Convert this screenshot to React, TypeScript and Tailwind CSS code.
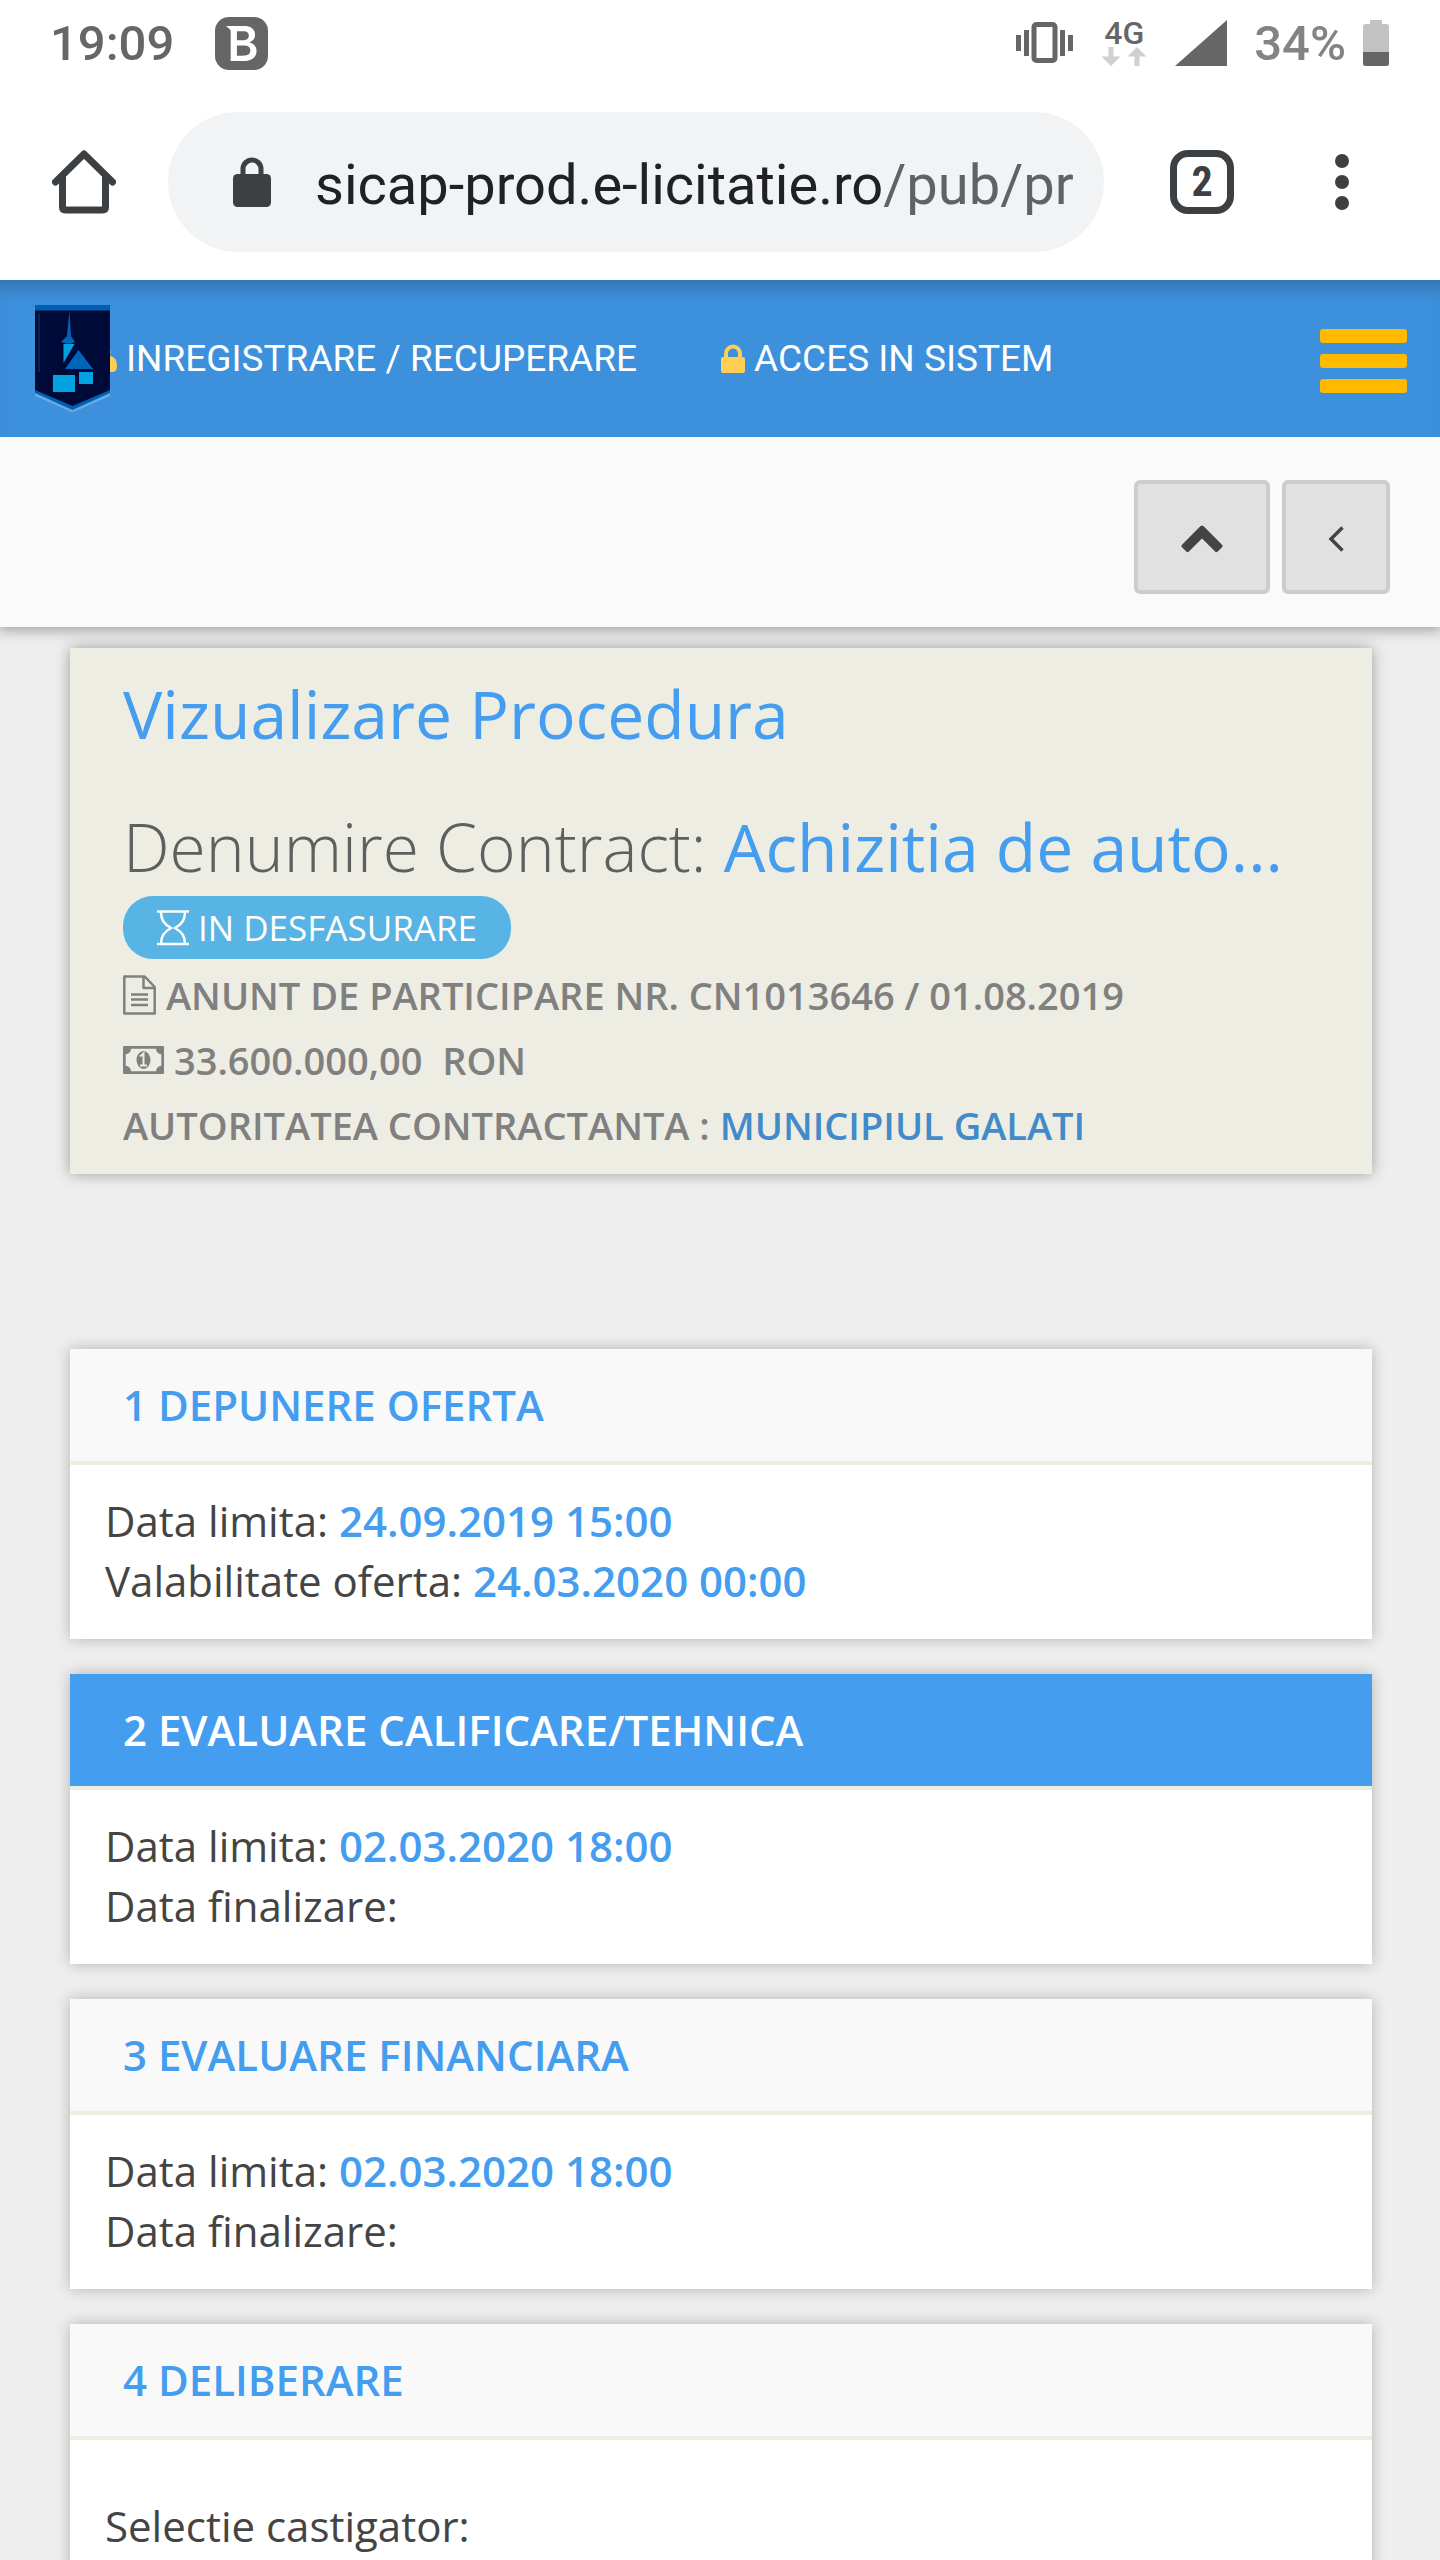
import type { ReactNode } from 'react';
import { SiBitdefender } from 'react-icons/si';

interface Step {
  title: string;
  active?: boolean;
  spaced?: boolean;
  rows: { label: string; value?: string }[];
}

const steps: Step[] = [
  {
    title: '1 DEPUNERE OFERTA',
    rows: [
      { label: 'Data limita:', value: '24.09.2019 15:00' },
      { label: 'Valabilitate oferta:', value: '24.03.2020 00:00' },
    ],
  },
  {
    title: '2 EVALUARE CALIFICARE/TEHNICA',
    active: true,
    rows: [{ label: 'Data limita:', value: '02.03.2020 18:00' }, { label: 'Data finalizare:' }],
  },
  {
    title: '3 EVALUARE FINANCIARA',
    rows: [{ label: 'Data limita:', value: '02.03.2020 18:00' }, { label: 'Data finalizare:' }],
  },
  {
    title: '4 DELIBERARE',
    spaced: true,
    rows: [{ label: 'Selectie castigator:' }],
  },
];

function StatusBar() {
  return (
    <div className="flex h-[84px] items-center pt-[2px] pr-[51px] pl-[50px] text-[49px] leading-none font-medium text-[#666666]">
      <span>19:09</span>
      <span className="ml-[41px] flex h-[53px] w-[53px] items-center justify-center rounded-[14px] bg-[#666666] text-white">
        <SiBitdefender className="h-[35px] w-[35px]" />
      </span>

      <svg className="ml-auto h-[42px] w-[58px]" viewBox="0 0 58 42" fill="currentColor">
        <path d="M0 13h5v16H0zM8 8h5v26H8zM44 8h5v26h-5zM52 13h5v16h-5z" />
        <rect x="18" y="2.500" width="21" height="36" rx="2.500" fill="none" stroke="currentColor" strokeWidth="5" />
      </svg>
      <span className="ml-[27px] flex w-[46px] flex-col items-center">
        <span className="text-[32px] leading-7">4G</span>
        <svg className="h-[20px] w-[46px]" viewBox="0 0 46 20" fill="#d0d0d0">
          <path d="M7.500 0h5v9.500h7L10 19 .5 9.500h7zM33.500 19h5V9.500h7L36 0l-9.500 9.500h7z" />
        </svg>
      </span>
      <svg className="ml-[28px] h-[46px] w-[52px]" viewBox="0 0 52 46" fill="currentColor">
        <path d="M52 0v46H0z" />
      </svg>
      <span className="ml-[27px] text-[#838383]">34%</span>
      <svg className="ml-[17px] h-[46px] w-[26px]" viewBox="0 0 26 46">
        <path d="M7 0h12v4h4.500a2.500 2.500 0 0 1 2.500 2.500V32H0V6.500A2.500 2.500 0 0 1 2.500 4H7z" fill="#c2c2c2" />
        <path d="M0 32h26v11.500a2.500 2.500 0 0 1-2.500 2.500h-21A2.500 2.500 0 0 1 0 43.500z" fill="#666666" />
      </svg>
    </div>
  );
}

function BrowserBar() {
  return (
    <div className="flex h-[196px] items-center pr-[91px] pl-[52px] text-[#3c4043]">
      <button type="button" aria-label="Home" className="shrink-0">
        <svg className="h-[64px] w-[64px]" viewBox="0 0 64 64" fill="none" stroke="currentColor" strokeWidth="7" strokeLinecap="round" strokeLinejoin="round">
          <path d="M3.500 32 32 4l28.500 28" />
          <path d="M10.500 27v30q0 3 3 3h37q3 0 3-3V27" />
        </svg>
      </button>
      <button type="button" className="ml-[52px] flex h-[140px] min-w-0 flex-1 items-center rounded-full bg-[#f1f3f4] pr-[24px] pl-[65px] text-left">
        <svg className="h-[50px] w-[38px] shrink-0" viewBox="0 0 38 50">
          <rect x="0" y="17" width="38" height="33" rx="4.500" fill="currentColor" />
          <path d="M10 19v-7a9 9 0 0 1 18 0v7" fill="none" stroke="currentColor" strokeWidth="5" />
        </svg>
        <span className="ml-[44px] overflow-hidden pt-1.5 text-[56px] leading-[72px] whitespace-nowrap text-[#202124]">
          sicap-prod.e-licitatie.ro<span className="text-[#5f6368]">/pub/pr</span>
        </span>
      </button>
      <button type="button" aria-label="Tabs" className="ml-[66px] flex h-[64px] w-[64px] shrink-0 items-center justify-center rounded-[18px] border-[7px] border-[#3c4043] font-['Roboto_Condensed',Roboto,sans-serif] text-[42px] leading-none font-bold">
        2
      </button>
      <button type="button" aria-label="Menu" className="ml-[101px] flex shrink-0 flex-col gap-[7px]">
        <span className="h-[14px] w-[14px] rounded-full bg-[#3c4043]" />
        <span className="h-[14px] w-[14px] rounded-full bg-[#3c4043]" />
        <span className="h-[14px] w-[14px] rounded-full bg-[#3c4043]" />
      </button>
    </div>
  );
}

function Logo() {
  return (
    <svg className="relative z-10 h-[108px] w-[75px] shrink-0" viewBox="0 0 75 108">
      <path d="M0 85v6l37.500 16.500L75 91v-6z" fill="#67a9e4" />
      <path d="M0 0h75v88l-37.500 17L0 88z" fill="#0060b4" />
      <path d="M0 5.500h75V85l-37.500 16L0 85z" fill="#000a38" />
      <path d="M4 8v59" stroke="#04264f" strokeWidth="2" />
      <path d="M34.500 5.500 32 31l-6 6q8 3 14 0l-4-6z" fill="#0065b8" />
      <path d="M28.500 39h11l-11 19z" fill="#00a3e0" />
      <path d="M43.500 45 58 64H30z" fill="#0065b8" />
      <path d="M18 70h22v17H18zM44 67h14v12H44z" fill="#00a3e0" />
    </svg>
  );
}

function SiteNav() {
  return (
    <nav className="relative z-10 flex h-[157px] items-center bg-[#3d90dc] pr-[33px] pl-[35px] text-[37px] leading-[52px] text-white shadow-[inset_0_20px_18px_-14px_rgba(40,90,130,0.6)]">
      <Logo />
      <a href="#inregistrare" className="flex items-center">
        <svg className="-ml-[20px] h-[30px] w-[27px]" viewBox="0 0 27 30" fill="#ffce54">
          <circle cx="13.500" cy="8" r="7" />
          <path d="M6 12q7.500 6 15 0 6 2 6 10 0 6-5 6H5q-5 0-5-6 0-8 6-10z" />
        </svg>
        <span className="ml-[9px]">INREGISTRARE / RECUPERARE</span>
      </a>
      <a href="#acces" className="ml-[84px] flex items-center">
        <svg className="h-[30px] w-[24px]" viewBox="0 0 24 30">
          <rect y="13" width="24" height="16" rx="2" fill="#ffce54" />
          <path d="M5 14V9.500a7 7 0 0 1 14 0V14" fill="none" stroke="#ffce54" strokeWidth="4" />
        </svg>
        <span className="ml-[9px]">ACCES IN SISTEM</span>
      </a>
      <button type="button" aria-label="Meniu" className="ml-auto flex flex-col gap-[11px] pt-1">
        <span className="h-[14px] w-[87px] rounded-[3px] bg-[#ffba00]" />
        <span className="h-[14px] w-[87px] rounded-[3px] bg-[#ffba00]" />
        <span className="h-[14px] w-[87px] rounded-[3px] bg-[#ffba00]" />
      </button>
    </nav>
  );
}

function ActionBar() {
  return (
    <div className="relative flex justify-end gap-3 bg-[#fafafa] pt-[43px] pr-[50px] pb-[33px] text-[#444444] shadow-[0_2px_12px_2px_rgba(0,0,0,0.3)]">
      <button type="button" aria-label="Sus" className="flex h-[114px] w-[136px] items-center justify-center rounded-md border-4 border-[#cccccc] bg-[#e1e1e1] pt-1">
        <svg className="h-[30px] w-[42px]" viewBox="0 0 42 30" fill="currentColor">
          <path d="M19.600 2.100q1.400-1.400 2.800 0L41 20.700q1.300 1.300 0 2.600l-4.300 4.200q-1.300 1.300-2.600 0L21 14.400 7.900 27.500q-1.300 1.300-2.600 0L1 23.300q-1.300-1.300 0-2.600z" />
        </svg>
      </button>
      <button type="button" aria-label="Inapoi" className="flex h-[114px] w-[108px] items-center justify-center rounded-md border-4 border-[#cccccc] bg-[#e1e1e1] pt-1">
        <svg className="h-[26px] w-[16px]" viewBox="0 0 16 26" fill="none" stroke="currentColor" strokeWidth="3.500">
          <path d="M14.500 1.500 3 13l11.500 11.500" />
        </svg>
      </button>
    </div>
  );
}

function DetailRow({ icon, children }: { icon?: ReactNode; children: ReactNode }) {
  return (
    <div className="flex h-[65px] items-center whitespace-pre">
      {icon}
      <span>{children}</span>
    </div>
  );
}

function ProcedureCard() {
  return (
    <section className="mt-[21px] bg-[#edede4] px-[53px] pt-5 pb-[17px] shadow-[0_0_14px_rgba(0,0,0,0.35)]">
      <h1 className="text-[66px] leading-[90px] text-[#449dee]">Vizualizare Procedura</h1>
      <h2 className="mt-[42px] truncate text-[66px] leading-[92px] font-light text-[#5f5f5f]">
        Denumire Contract: <span className="font-normal text-[#449dee]">Achizitia de auto...</span>
      </h2>
      <div className="mt-1 flex h-[63px] w-fit items-center rounded-[30px] bg-[#57b4e4] px-[34px] text-[35px] leading-none text-white">
        <svg className="mr-[9px] h-[36px] w-[32px]" viewBox="0 0 32 36" fill="none" stroke="currentColor" strokeWidth="2.500">
          <path d="M0 1.500h32M0 34h32M4 2c0 8 3 12 10 16-7 4-10 8-10 16M28 2c0 8-3 12-10 16 7 4 10 8 10 16" />
        </svg>
        IN DESFASURARE
      </div>
      <div className="mt-[3px] text-[38px] leading-[52px] font-semibold text-[#808080]">
        <DetailRow
          icon={
            <svg className="mr-[10px] h-[40px] w-[33px]" viewBox="0 0 33 40" fill="none" stroke="currentColor" strokeWidth="2.500" strokeLinejoin="round">
              <path d="M1.300 1.500h20.400l10 10.500v26.500H1.300zM20.500 1.500V13h11M8 19.500h17M8 24.500h17M8 30h17" />
            </svg>
          }
        >
          ANUNT DE PARTICIPARE NR. CN1013646 / 01.08.2019
        </DetailRow>
        <DetailRow
          icon={
            <svg className="mr-[10px] h-[28px] w-[41px]" viewBox="0 0 41 28" fill="currentColor">
              <path fillRule="evenodd" d="M1 0h39q1 0 1 1v26q0 1-1 1H1q-1 0-1-1V1q0-1 1-1zM8 2.800a5.500 5.500 0 0 1-5.300 5.500v11.400A5.500 5.500 0 0 1 8 25.200h25a5.500 5.500 0 0 1 5.300-5.500V8.300A5.500 5.500 0 0 1 33 2.800z" />
              <ellipse cx="20.500" cy="14" rx="7" ry="9" />
              <path d="M17 10.500 20.500 7.500V19M17 19.500h7" fill="none" stroke="#edede4" strokeWidth="2" />
            </svg>
          }
        >
          {'33.600.000,00  RON'}
        </DetailRow>
        <DetailRow>
          AUTORITATEA CONTRACTANTA :{' '}
          <a href="#autoritate" className="text-[#428bca]">MUNICIPIUL GALATI</a>
        </DetailRow>
      </div>
    </section>
  );
}

function StepCard({ step }: { step: Step }) {
  return (
    <section className="bg-white text-[42px] leading-[60px] shadow-[0_0_14px_rgba(0,0,0,0.25)] last:flex-1">
      <h3
        className={`border-b-4 border-[#edede0] px-[53px] py-[26px] font-semibold ${
          step.active ? 'bg-[#449dee] text-white' : 'bg-[#f9f9f9] text-[#449dee]'
        }`}
      >
        {step.title}
      </h3>
      <div className={`px-[35px] pb-7 text-[#444444] ${step.spaced ? 'pt-14' : 'pt-[26px]'}`}>
        {step.rows.map((row) => (
          <p key={row.label}>
            {row.label} {row.value && <span className="font-semibold text-[#449dee]">{row.value}</span>}
          </p>
        ))}
      </div>
    </section>
  );
}

export default function App() {
  return (
    <div className="flex min-h-screen flex-col bg-[#eeeeee] font-[Roboto,sans-serif]">
      <header className="bg-white">
        <StatusBar />
        <BrowserBar />
      </header>
      <SiteNav />
      <ActionBar />
      <main className="flex flex-1 flex-col pr-[68px] pl-[70px] font-['Open_Sans',sans-serif]">
        <ProcedureCard />
        <div className="mt-[175px] flex flex-1 flex-col gap-[35px]">
          {steps.map((step) => (
            <StepCard key={step.title} step={step} />
          ))}
        </div>
      </main>
    </div>
  );
}
